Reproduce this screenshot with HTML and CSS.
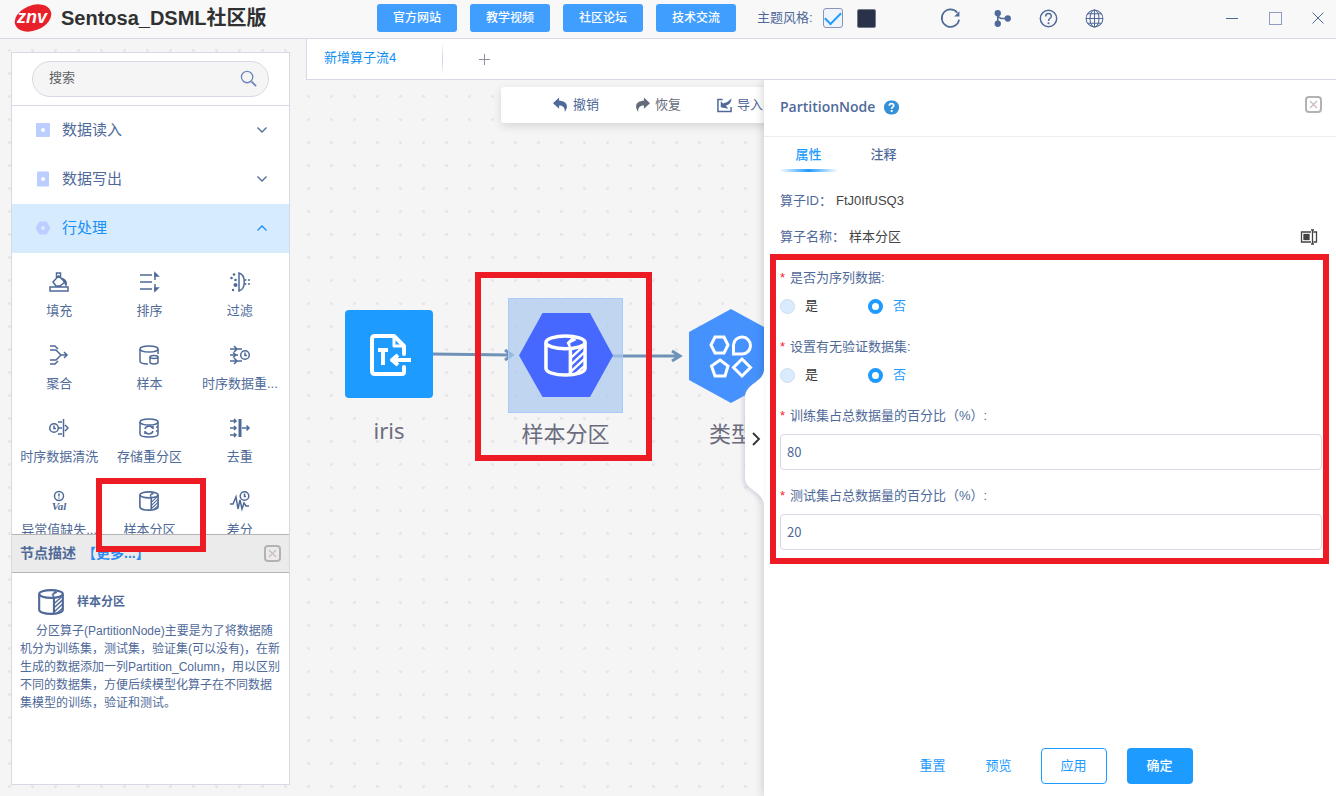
FILE: index.html
```html
<!DOCTYPE html>
<html lang="zh-CN">
<head>
<meta charset="utf-8">
<title>Sentosa_DSML社区版</title>
<link rel="stylesheet" href="styles.css">
</head>
<body>
<svg class="defs" aria-hidden="true">
  <symbol id="partition" viewBox="0 0 44 44">
    <g fill="none" stroke="currentColor" stroke-width="3.600">
      <ellipse cx="22" cy="8.500" rx="20" ry="6.500"/>
      <path d="M2 9V35C2 39 11 42 22 42S42 39 42 35V9M27 15V42"/>
      <path d="M27 15L24 9L29 4L32 6L26 9Z" fill="currentColor" stroke-width="1.500"/>
      <path stroke-width="2.400" d="M28 24L40 13M28 31L42 18M28 38L42 25M32 41L42 32"/>
    </g>
  </symbol>
  <symbol id="close" viewBox="0 0 17 17">
    <rect x="1" y="1" width="15" height="15" rx="3" fill="none" stroke="#b2b2b2" stroke-width="2"/>
    <path d="M5 5L12 12M12 5L5 12" stroke="#cfc0c0" stroke-width="1.500"/>
  </symbol>
  <symbol id="down" viewBox="0 0 10 6"><path d="M0.500 0.500L5 5L9.500 0.500" fill="none" stroke="currentColor" stroke-width="1.300"/></symbol>
  <symbol id="up" viewBox="0 0 10 6"><path d="M0.500 5.500L5 1L9.500 5.500" fill="none" stroke="currentColor" stroke-width="1.300"/></symbol>
</svg>

<header class="topbar">
  <div class="brand">
    <svg class="logo" viewBox="0 0 38 28"><ellipse cx="19" cy="14" rx="19" ry="12.500" transform="rotate(-22 19 14)" fill="#e8202a"/><text x="18" y="19" text-anchor="middle" class="logo-text">znv</text></svg>
    <h1 class="title">Sentosa_DSML社区版</h1>
  </div>
  <nav class="links">
    <button class="link-btn">官方网站</button>
    <button class="link-btn">教学视频</button>
    <button class="link-btn">社区论坛</button>
    <button class="link-btn">技术交流</button>
  </nav>
  <div class="theme">
    <label for="theme-light">主题风格:</label>
    <input class="check" id="theme-light" type="checkbox" checked>
    <button class="swatch" aria-label="深色"></button>
  </div>
  <div class="actions">
    <button class="icon-btn refresh" aria-label="刷新"><svg viewBox="0 0 20 20"><path d="M16.500 4.500A8.300 8.300 0 1 0 18.200 11" fill="none" stroke="currentColor" stroke-width="1.600"/><path d="M18.500 3V8H13.500Z" fill="currentColor"/></svg></button>
    <button class="icon-btn" aria-label="分支"><svg viewBox="0 0 20 20"><g fill="currentColor"><circle cx="5.500" cy="5" r="3"/><circle cx="5.500" cy="15" r="3"/><circle cx="15" cy="10" r="3"/></g><path d="M5.500 5V15M5.500 8L8.500 10H14" fill="none" stroke="currentColor" stroke-width="1.500"/></svg></button>
    <button class="icon-btn" aria-label="帮助"><svg viewBox="0 0 20 20"><circle cx="10" cy="10" r="7.800" fill="none" stroke="currentColor" stroke-width="1.400"/><path d="M7.300 8C7.300 4.300 12.700 4.300 12.700 7.800C12.700 9.800 10 9.800 10 12.300" fill="none" stroke="currentColor" stroke-width="1.400"/><circle cx="10" cy="14.500" r="1" fill="currentColor"/></svg></button>
    <button class="icon-btn" aria-label="语言"><svg viewBox="0 0 20 20" fill="none" stroke="currentColor"><circle cx="10" cy="10" r="8"/><ellipse cx="10" cy="10" rx="4.300" ry="8"/><path d="M10 2V18M2 10H18M3.300 5.500H16.700M3.300 14.500H16.700"/></svg></button>
  </div>
  <div class="window-controls">
    <button class="win-btn" aria-label="最小化"><svg viewBox="0 0 14 14"><path d="M1 7.500H13" stroke="currentColor"/></svg></button>
    <button class="win-btn" aria-label="最大化"><svg viewBox="0 0 14 14"><rect x="1.500" y="1.500" width="12" height="12" fill="none" stroke="#8d9cc0"/></svg></button>
    <button class="win-btn" aria-label="关闭"><svg viewBox="0 0 14 14"><path d="M1.500 1.500L12.500 12.500M12.500 1.500L1.500 12.500" stroke="currentColor"/></svg></button>
  </div>
</header>

<div class="workspace">
  <aside class="sidebar">
    <div class="search-area">
      <div class="search">
        <input class="search-input" type="text" placeholder="搜索" aria-label="搜索">
        <svg class="search-icon" viewBox="0 0 18 18"><circle cx="7.500" cy="7.500" r="6" fill="none" stroke="currentColor" stroke-width="1.400"/><path d="M12 12L17 17" stroke="currentColor" stroke-width="1.800"/></svg>
      </div>
    </div>
    <button class="group"><svg class="group-icon" viewBox="0 0 16 16"><rect x="1" y="1" width="14" height="14" rx="1" fill="#bccdff"/><circle cx="8" cy="8" r="2" fill="#fff"/></svg><span class="group-name">数据读入</span><svg class="arrow"><use href="#down"/></svg></button>
    <button class="group"><svg class="group-icon" viewBox="0 0 16 16"><rect x="2" y="0.500" width="12" height="15" rx="1" fill="#bccdff"/><circle cx="8" cy="8" r="2" fill="#fff"/></svg><span class="group-name">数据写出</span><svg class="arrow"><use href="#down"/></svg></button>
    <button class="group group-open"><svg class="group-icon" viewBox="0 0 16 16"><path d="M4.500 1.500H11.500L15.500 8L11.500 14.500H4.500L0.500 8Z" fill="#bccdff"/><circle cx="8" cy="8" r="2" fill="#d8ebff"/></svg><span class="group-name">行处理</span><svg class="arrow"><use href="#up"/></svg></button>

    <div class="tools">
      <button class="tool"><svg class="tool-icon" viewBox="0 0 20 20"><path d="M1 15H19V19H1ZM7.500 6V1H11.500V6M9.500 4L16 10L11 14H7L4 10Z"/><path d="M14 7Q18 9 17 13Z" fill="currentColor"/></svg><span>填充</span></button>
      <button class="tool"><svg class="tool-icon" viewBox="0 0 20 20"><path d="M1 3H13M1 10H13M1 17H13M16 1V8M16 12V19"/><path d="M16 1L19 4H16ZM16 19L19 16H16Z" fill="currentColor"/></svg><span>排序</span></button>
      <button class="tool"><svg class="tool-icon" viewBox="0 0 20 20"><path d="M9 1V19C16 17 16 3 9 1Z"/><g fill="currentColor" stroke="none"><circle cx="4" cy="2.500" r="1.300"/><circle cx="1.500" cy="6" r="1.300"/><circle cx="5.500" cy="8" r="1.300"/><circle cx="5.500" cy="13" r="2"/><circle cx="3" cy="18" r="1.200"/><circle cx="15.500" cy="8" r="1"/><circle cx="15.500" cy="12" r="1"/><circle cx="19" cy="8" r="1"/><circle cx="19" cy="12" r="1"/></g></svg><span>过滤</span></button>
      <button class="tool"><svg class="tool-icon" viewBox="0 0 20 20"><path d="M1 1H6L9 4M1 5H7L12 10H18M1 15H7L12 10M1 19H6L9 16M15 7L18 10L15 13"/></svg><span>聚合</span></button>
      <button class="tool"><svg class="tool-icon" viewBox="0 0 20 20"><ellipse cx="10" cy="4" rx="9" ry="3"/><path d="M1 4V16C1 18 5 19 9 19M19 4V9"/><ellipse cx="15" cy="12" rx="4" ry="1.500"/><path d="M11 12V17C11 19.500 19 19.500 19 17V12"/></svg><span>样本</span></button>
      <button class="tool"><svg class="tool-icon" viewBox="0 0 20 20"><path d="M0 4H12M0 10H8M0 16H12M4 1L7 4L4 7M3 7.500L6 10L3 12.500M4 13L7 16L4 19"/><circle cx="15" cy="10" r="4.300"/><path d="M15 7.500V10.500H17"/></svg><span>时序数据重...</span></button>
      <button class="tool"><svg class="tool-icon" viewBox="0 0 20 20"><circle cx="5" cy="10" r="4.300"/><path d="M5 7.500V10.500H7M9 4H13M10 10H13M9 16H13M14.500 1V19M16 7L19 10L16 13"/></svg><span>时序数据清洗</span></button>
      <button class="tool"><svg class="tool-icon" viewBox="0 0 20 20"><ellipse cx="10" cy="4" rx="9" ry="3"/><path d="M1 4V16C1 20 19 20 19 16V4"/><path d="M6 11A4 3.500 0 0 1 13.500 10M14 8V11M14 13A4 3.500 0 0 1 6.500 14M6 16V13M17 9H19M17 13H19"/></svg><span>存储重分区</span></button>
      <button class="tool"><svg class="tool-icon" viewBox="0 0 20 20"><path d="M0 3H6M0 10H6M0 17H6M4 1L6 3L4 5M4 8L6 10L4 12M4 15L6 17L4 19M12 10H19M16.500 7.500L19 10L16.500 12.500"/><path stroke-width="3" d="M10 1V19"/></svg><span>去重</span></button>
      <button class="tool"><svg class="tool-icon" viewBox="0 0 20 20"><circle cx="10" cy="5" r="4.500"/><path d="M10 2.500V5.500M10 6.500V7.500"/><text x="10" y="19" text-anchor="middle" class="val-text">Val</text></svg><span>异常值缺失...</span></button>
      <button class="tool"><svg class="tool-icon"><use href="#partition"/></svg><span>样本分区</span></button>
      <button class="tool"><svg class="tool-icon" viewBox="0 0 20 20"><path d="M0 13H3L6 6L8 18L10 9L12 18L14 12L16 15H19"/><circle cx="14.500" cy="5" r="4.300"/><path d="M14.500 2.500V5.500H16"/></svg><span>差分</span></button>
    </div>

    <section class="desc">
      <div class="desc-head">
        <h2 class="desc-heading">节点描述</h2>
        <a class="more" href="#more">【更多...】</a>
        <button class="close" aria-label="关闭描述"><svg><use href="#close"/></svg></button>
      </div>
      <div class="desc-body">
        <h3 class="desc-title"><svg class="desc-icon"><use href="#partition"/></svg>样本分区</h3>
        <p class="desc-text">分区算子(PartitionNode)主要是为了将数据随机分为训练集，测试集，验证集(可以没有)，在新生成的数据添加一列Partition_Column，用以区别不同的数据集，方便后续模型化算子在不同数据集模型的训练，验证和测试。</p>
      </div>
    </section>
    <div class="mark mark-tool"></div>
  </aside>

  <main class="main">
    <div class="flow-tabs">
      <button class="flow-tab">新增算子流4</button>
      <button class="add-tab" aria-label="新增"><svg viewBox="0 0 11 11"><path d="M5.500 0V11M0 5.500H11" stroke="#8f929e"/></svg></button>
    </div>
    <div class="stage">
      <div class="canvas">
        <div class="toolbar">
          <button class="bar-item"><svg viewBox="0 0 16 16"><path d="M0 6L6.500 0V3.500C13 3.500 18 8 12.500 15.500C13 10.500 10.500 8.500 6.500 8.500V12Z" fill="currentColor"/></svg>撤销</button>
          <button class="bar-item bar-muted"><svg viewBox="0 0 16 16"><path d="M16 6L9.500 0V3.500C3 3.500 -2 8 3.500 15.500C3 10.500 5.500 8.500 9.500 8.500V12Z" fill="currentColor"/></svg>恢复</button>
          <button class="bar-item"><svg viewBox="0 0 16 16"><path d="M6 2H1V15H15V10" fill="none" stroke="currentColor" stroke-width="1.600"/><path d="M15.500 1Q15 7.500 9.500 8.500L12 12L4 10.500V4L6.500 6.500Q12 5 15.500 1Z" fill="currentColor"/></svg>导入</button>
        </div>
        <svg class="edges" viewBox="0 0 458 400">
          <g fill="none" stroke="#7092b8" stroke-width="3"><path d="M126 274L206 275M199 270L206 275L199 280"/><path d="M306 276L373 276M366 271L374 276L366 281"/></g>
        </svg>
        <div class="node node-iris">
          <svg class="shape" viewBox="0 0 88 88"><rect width="88" height="88" rx="4" fill="#1e9bff"/><g fill="none" stroke="#fff" stroke-width="4" stroke-linecap="round" stroke-linejoin="round"><path d="M59 44V36L49 26H30Q27 26 27 29V61Q27 64 30 64H57Q59 64 59 62V57"/><path stroke-width="3" d="M49 27V36H59"/><path d="M33 40H43M38 40V55M66 50H48M53 45L47 50L53 55" stroke-linecap="butt"/></g></svg>
          <span class="node-label">iris</span>
        </div>
        <div class="node node-part">
          <svg class="shape" viewBox="0 0 115 115"><rect x="0.500" y="0.500" width="114" height="114" fill="#a9c9ee" fill-opacity="0.700" stroke="#a9c9f8"/><path d="M34.500 15H82L105 57.500L82 99H34.500L11 57.500Z" fill="#4668ff"/><svg class="white" x="36" y="36" width="43" height="43"><use href="#partition"/></svg></svg>
          <span class="node-label">样本分区</span>
        </div>
        <div class="node node-type">
          <svg class="shape" viewBox="0 0 84 94"><path d="M42 0L84 23V71L42 94L0 71V23Z" fill="#4592ff"/><g fill="none" stroke="#fff" stroke-width="3"><path d="M26 28H35L39 36L35 44H26L22 36Z"/><path d="M44.500 45V36A8.500 8.500 0 1 1 53 45Z"/><path d="M31 51L39 57L36 67H26L22.500 57Z"/><path d="M53 50L61.500 58.500L53 67L44.500 58.500Z"/></g></svg>
          <span class="node-label">类型</span>
        </div>
        <div class="mark mark-node"></div>
      </div>

      <section class="panel">
        <button class="handle" aria-label="收起"><svg viewBox="0 0 20 134"><path d="M20 0C19 13 1 13 1 28V108C1 120 18 121 20 134Z" fill="#fff"/><path d="M9 63L15 69L9 75" fill="none" stroke="#333" stroke-width="1.800"/></svg></button>
        <div class="panel-head">
          <h2 class="panel-title">PartitionNode</h2>
          <svg class="hint" viewBox="0 0 15 15"><rect width="15" height="14" y="0.500" rx="6.500" fill="#3590d8"/><path d="M5.300 5.800C5.300 2.800 9.900 2.900 9.700 5.600C9.600 7.200 7.600 7 7.600 9" fill="none" stroke="#fff" stroke-width="1.700"/><rect x="6.700" y="10" width="1.900" height="1.900" fill="#fff"/></svg>
          <button class="close" aria-label="关闭"><svg><use href="#close"/></svg></button>
        </div>
        <div class="panel-tabs">
          <button class="panel-tab panel-tab-on">属性</button>
          <button class="panel-tab">注释</button>
        </div>
        <div class="facts">
          <div class="fact"><span class="fact-key">算子ID：</span><span>FtJ0IfUSQ3</span></div>
          <div class="fact"><span class="fact-key">算子名称：</span><span>样本分区</span><button class="rename" aria-label="重命名"><svg viewBox="0 0 18 16" fill="none" stroke="#444" stroke-width="1.300"><path d="M11 3H1.500V13H11M13.500 3H16.500V13H13.500M12.500 1V15M11 1H14M11 15H14"/><rect x="4" y="5.500" width="5" height="5" fill="#444"/></svg></button></div>
        </div>
        <form class="form">
          <div class="field" role="radiogroup" aria-labelledby="seq-label">
            <span class="field-label" id="seq-label">是否为序列数据:</span>
            <div class="radios">
              <label class="option"><input class="radio" type="radio" name="seq"><span>是</span></label>
              <label class="option"><input class="radio" type="radio" name="seq" checked><span>否</span></label>
            </div>
          </div>
          <div class="field" role="radiogroup" aria-labelledby="val-label">
            <span class="field-label" id="val-label">设置有无验证数据集:</span>
            <div class="radios">
              <label class="option"><input class="radio" type="radio" name="val"><span>是</span></label>
              <label class="option"><input class="radio" type="radio" name="val" checked><span>否</span></label>
            </div>
          </div>
          <div class="field">
            <label class="field-label" for="train">训练集占总数据量的百分比（%）:</label>
            <input class="text-input" id="train" type="text" value="80">
          </div>
          <div class="field">
            <label class="field-label" for="test">测试集占总数据量的百分比（%）:</label>
            <input class="text-input" id="test" type="text" value="20">
          </div>
          <div class="mark mark-form"></div>
        </form>
        <div class="panel-foot">
          <button class="btn">重置</button>
          <button class="btn">预览</button>
          <button class="btn btn-outline">应用</button>
          <button class="btn btn-solid">确定</button>
        </div>
      </section>
    </div>
  </main>
</div>
</body>
</html>
```
FILE: styles.css
```css
* {
  box-sizing: border-box;
}

body {
  display: flex;
  flex-direction: column;
  height: 100vh;
  margin: 0;
  overflow: hidden;
  background: #f5f5f5;
  color: #4f6a99;
  font: 13px/20px "Liberation Sans", "Noto Sans CJK SC", sans-serif;
}

button,
input {
  margin: 0;
  padding: 0;
  border: 0;
  background: none;
  color: inherit;
  font: inherit;
}

h1,
h2,
h3,
p {
  margin: 0;
}

svg {
  display: block;
}

.defs {
  display: none;
}

.mark {
  position: absolute;
  z-index: 5;
  border: 6px solid #ed1c24;
  pointer-events: none;
}

/* Top bar */
.topbar {
  display: flex;
  flex: none;
  align-items: center;
  height: 39px;
  padding: 0 11px 2px 14px;
  border-bottom: 1px solid #d6d9e6;
  background: #f8f8f8;
}

.brand {
  display: flex;
  flex: 0 0 363px;
  align-items: center;
  gap: 9px;
}

.logo {
  width: 38px;
  height: 28px;
  overflow: visible;
}

.logo-text {
  fill: #fff;
  font: italic bold 18px "Liberation Sans", sans-serif;
}

.title {
  color: #303133;
  font-size: 20px;
  line-height: 28px;
}

.links {
  display: flex;
  gap: 13px;
}

.link-btn {
  width: 80px;
  height: 28px;
  border-radius: 3px;
  background: #409eff;
  color: #fff;
  font-size: 12px;
  font-weight: 500;
}

.theme {
  display: flex;
  align-items: center;
  margin-left: 21px;
}

.check {
  display: grid;
  place-items: center;
  width: 20px;
  height: 20px;
  margin: 0 14px 0 10px;
  border: 1px solid #8695b8;
  border-radius: 3px;
  background: #eef3fc;
  appearance: none;
}

.check:checked::after {
  width: 14px;
  height: 7px;
  margin-bottom: 4px;
  border: solid #1e9bff;
  border-width: 0 0 2px 2px;
  content: "";
  transform: rotate(-45deg);
}

.swatch {
  width: 19px;
  height: 19px;
  border: 1px solid #737a8b;
  border-radius: 2px;
  background: #293248;
}

.actions {
  display: flex;
  gap: 25px;
  margin-left: 64px;
}

.icon-btn,
.icon-btn svg {
  width: 21px;
  height: 21px;
}

.refresh {
  margin-right: 6px;
}

.window-controls {
  display: flex;
  gap: 29px;
  margin-left: auto;
}

.win-btn,
.win-btn svg {
  width: 14px;
  height: 14px;
}

/* Workspace */
.workspace {
  display: flex;
  flex: 1;
  min-height: 0;
  background: radial-gradient(circle, #e6e6e8 1px, transparent 2px) -2px 0 / 23px 23px;
}

.sidebar {
  position: relative;
  display: flex;
  flex: 0 0 279px;
  flex-direction: column;
  margin: 13px 16px 11px 11px;
  border: 1px solid #d6d9e6;
  background: #fff;
}

.search-area {
  flex: none;
  padding: 8px 20px;
  border-bottom: 1px solid #d6d9e6;
}

.search {
  display: flex;
  align-items: center;
  height: 36px;
  padding: 0 11px 2px 16px;
  border: 1px solid #d6d9e6;
  border-radius: 18px;
  background: #f5f5f5;
}

.search-input {
  flex: 1;
  min-width: 0;
}

.search-input::placeholder {
  color: #606266;
}

.search-icon {
  width: 17px;
  height: 17px;
  color: #6f86bd;
}

.group {
  display: flex;
  flex: 0 0 49px;
  align-items: center;
  padding: 0 22px 2px 23px;
  font-size: 15px;
  text-align: left;
}

.group-open {
  background: #d7ebff;
  color: #1890f5;
}

.group-icon {
  width: 16px;
  height: 16px;
  margin-right: 11px;
}

.group-name {
  flex: 1;
}

.arrow {
  width: 10px;
  height: 6px;
}

.tools {
  display: grid;
  flex: 1;
  grid-template-columns: repeat(3, 1fr);
  grid-auto-rows: 73px;
  min-height: 0;
  padding: 0 4px 0 2px;
  overflow: hidden;
}

.tool {
  display: flex;
  flex-direction: column;
  align-items: center;
  justify-content: flex-start;
  gap: 9px;
  padding-top: 19px;
  white-space: nowrap;
}

.tool-icon {
  width: 20px;
  height: 20px;
  overflow: visible;
  fill: none;
  stroke: currentColor;
  stroke-width: 1.5px;
}

.val-text {
  fill: currentColor;
  stroke: none;
  font: italic bold 11px "Liberation Serif", serif;
}

.desc {
  flex: 0 0 250px;
}

.desc-head {
  display: flex;
  align-items: center;
  height: 39px;
  padding: 0 8px;
  border: solid #b4b4b4;
  border-width: 1px 0;
  background: #ebebeb;
}

.desc-heading,
.more {
  padding-bottom: 2px;
  font-size: 14px;
  font-weight: bold;
}

.more {
  margin-left: 6px;
  color: #2d8cf0;
  text-decoration: none;
}

.close {
  margin-left: auto;
}

.close svg {
  width: 17px;
  height: 17px;
}

.desc-body {
  padding: 16px 7px 15px 8px;
  font-size: 12px;
  line-height: 18px;
}

.desc-title {
  display: flex;
  align-items: center;
  gap: 13px;
  padding-left: 18px;
  font-size: 12px;
}

.desc-icon {
  width: 26px;
  height: 26px;
}

.desc-text {
  padding-top: 7px;
  text-indent: 16px;
}

/* Flow tabs */
.main {
  display: flex;
  flex: 1;
  flex-direction: column;
  min-width: 0;
}

.flow-tabs {
  display: flex;
  flex: 0 0 41px;
  align-items: center;
  border: solid #d6d9e6;
  border-width: 0 0 1px 1px;
  background: #fff;
}

.flow-tab {
  width: 136px;
  height: 30px;
  padding: 0 0 2px 17px;
  border-right: 1px solid;
  border-image: linear-gradient(transparent, #c9cfe6, transparent) 1;
  border-left: 0;
  color: #0d8ff2;
  text-align: left;
}

.add-tab {
  padding: 1px 36px 0;
}

.add-tab svg {
  width: 11px;
  height: 11px;
}

.stage {
  display: flex;
  flex: 1;
  min-height: 0;
}

.canvas {
  position: relative;
  flex: 1;
  min-width: 0;
  overflow: hidden;
}

.toolbar {
  position: absolute;
  top: 7px;
  left: 195px;
  display: flex;
  gap: 36px;
  width: 600px;
  height: 36px;
  padding-left: 52px;
  border-radius: 3px;
  background: #fff;
  box-shadow: 0 3px 10px #0002;
}

.bar-item {
  display: flex;
  align-items: center;
  gap: 5px;
}

.bar-muted {
  color: #666b7a;
}

.bar-item svg {
  width: 15px;
  height: 16px;
}

.edges {
  position: absolute;
  top: 0;
  left: 0;
  width: 458px;
  height: 400px;
}

.node {
  position: absolute;
  display: flex;
  flex-direction: column;
  align-items: center;
}

.node-iris {
  top: 230px;
  left: 39px;
  width: 88px;
  gap: 16px;
}

.node-part {
  top: 218px;
  left: 202px;
  width: 115px;
  gap: 4px;
}

.node-type {
  top: 229px;
  left: 383px;
  width: 84px;
  gap: 14px;
}

.shape {
  width: 100%;
}

.white {
  color: #fff;
}

.node-label {
  color: #6b6c7e;
  font: 22px/32px "Noto Sans", "Noto Sans CJK SC", sans-serif;
}

.mark-node {
  top: 192px;
  left: 169px;
  width: 177px;
  height: 189px;
}

.mark-tool {
  top: 425px;
  left: 84px;
  width: 110px;
  height: 74px;
}

/* Property panel */
.panel {
  position: relative;
  display: flex;
  flex: 0 0 572px;
  flex-direction: column;
  background: #fff;
  box-shadow: 0 0 10px #0003;
  clip-path: inset(0 0 0 -40px);
}

.handle {
  position: absolute;
  top: 290px;
  left: -20px;
}

.handle svg {
  width: 20px;
  height: 134px;
  filter: drop-shadow(-2px 1px 2px #8892b055);
}

.panel-head {
  display: flex;
  flex: 0 0 57px;
  align-items: center;
  padding: 0 14px 2px 16px;
  border-bottom: 1px solid #ebeef0;
}

.panel-title {
  font: 600 14px/20px "Open Sans", sans-serif;
}

.hint {
  width: 15px;
  height: 15px;
  margin-left: 9px;
}

.panel-head .close {
  margin-bottom: 6px;
}

.panel-tabs {
  display: flex;
  gap: 18px;
  padding: 0 16px;
}

.panel-tab {
  width: 57px;
  height: 35px;
  padding-top: 3px;
  border-bottom: 3px solid transparent;
  font-weight: 500;
}

.panel-tab-on {
  border-image: linear-gradient(90deg, transparent, #1e9bff, transparent) 1;
  border-width: 0 0 3px;
  color: #1e9bff;
}

.facts {
  padding: 11px 18px 0 16px;
}

.fact {
  display: flex;
  align-items: center;
  height: 36px;
  color: #444;
}

.fact-key {
  margin-right: 4px;
  color: #4f6a99;
}

.rename {
  margin-left: auto;
}

.rename svg {
  width: 18px;
  height: 16px;
}

.form {
  position: relative;
  display: flex;
  flex-direction: column;
  gap: 16px;
  padding: 13px 14px 14px 16px;
}

.field {
  display: flex;
  flex-direction: column;
  gap: 8px;
}

.field-label::before {
  margin-right: 5px;
  color: #f5222d;
  content: "*";
}

.radios {
  display: flex;
  gap: 50px;
  padding-bottom: 5px;
}

.option {
  display: flex;
  align-items: center;
  gap: 10px;
  color: #333;
}

.option:has(:checked) {
  color: #1e9bff;
}

.radio {
  width: 15px;
  height: 15px;
  border: 1px solid #d3dcea;
  border-radius: 50%;
  background: #d8ebff;
  appearance: none;
}

.radio:checked {
  border: 4px solid #1e9bff;
  background: #fff;
}

.text-input {
  height: 36px;
  padding: 0 6px 2px;
  border: 1px solid #d6dae4;
  border-radius: 4px;
  font-family: "Noto Sans CJK SC", sans-serif;
}

.mark-form {
  inset: -1px 7px 0 6px;
}

.panel-foot {
  display: flex;
  justify-content: center;
  margin-top: auto;
  padding: 0 8px 12px 0;
}

.btn {
  width: 66px;
  height: 36px;
  border-radius: 4px;
  color: #1e9bff;
}

.btn-outline {
  margin: 0 20px 0 9px;
  border: 1px solid #1e9bff;
}

.btn-solid {
  background: #1e9bff;
  color: #fff;
  font-weight: 500;
}
```
